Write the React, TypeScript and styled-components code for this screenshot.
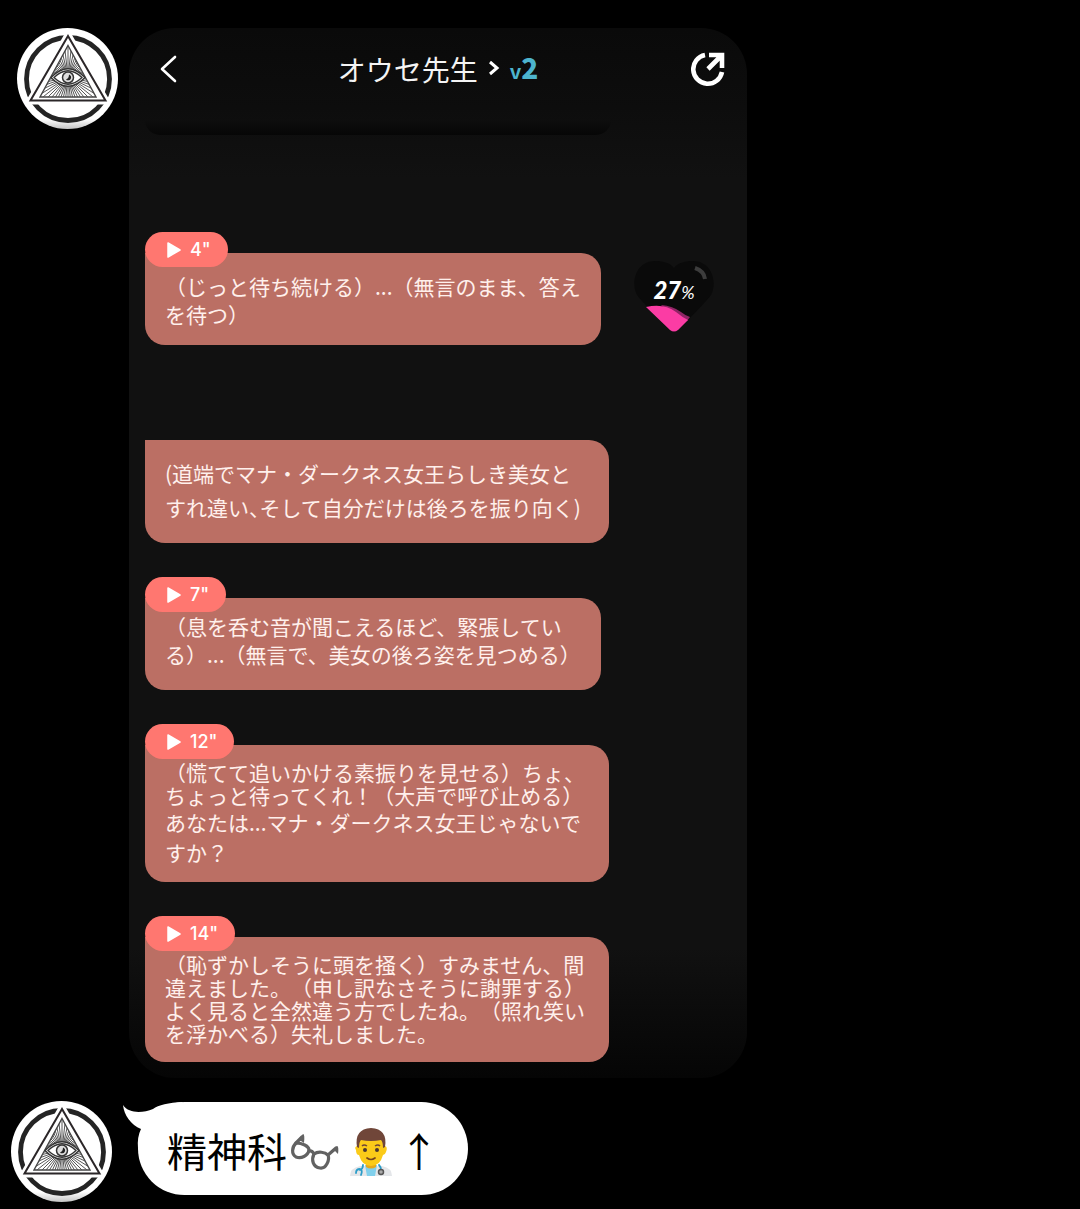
import React from "react";
import styled, { createGlobalStyle } from "styled-components";

const GlobalStyle = createGlobalStyle`
  *, *::before, *::after { box-sizing: border-box; }
  body {
    margin: 0;
    background: #000;
    font-family: "Noto Sans CJK JP", "Noto Sans", sans-serif;
    text-spacing-trim: space-all;
  }
  svg { display: block; flex: none; }
`;

const Chat = styled.main`
  display: flex;
  flex-direction: column;
  gap: 23px;
  padding: 28px 17px 7px;
`;

const ChatRow = styled.section<{ $gap: number; $pull?: number }>`
  display: flex;
  align-items: flex-start;
  gap: ${(p) => p.$gap}px;
  margin-left: ${(p) => -(p.$pull ?? 0)}px;
`;

const Card = styled.article`
  flex: 0 1 618px;
  min-width: 0;
  border-radius: 46px;
  overflow: hidden;
  padding-bottom: 16px;
  background: linear-gradient(180deg, #0a0a0a 0, #0d0d0d 80px, #111 150px, #111 calc(100% - 130px), #050505 100%);
`;

const Header = styled.header`
  display: grid;
  grid-template-columns: 1fr auto 1fr;
  align-items: center;
  height: 82px;
  padding: 0 22px;
`;

const IconButton = styled.button<{ $end?: boolean }>`
  justify-self: ${(p) => (p.$end ? "end" : "start")};
  padding: ${(p) => (p.$end ? "0" : "0 6px")};
  border: 0;
  background: none;
  color: #fff;
  cursor: pointer;
`;

const Title = styled.h1`
  display: flex;
  align-items: center;
  gap: 9px;
  margin: 0;
  font-size: 28px;
  line-height: 40px;
  font-weight: 400;
  color: #f4f4f4;
`;

const Version = styled.span`
  font-size: 28px;
  font-weight: 900;
  color: #4db4cd;
  small {
    font-size: 20px;
    font-weight: 700;
  }
`;

const FadedBubble = styled.div`
  width: 466px;
  max-width: calc(100% - 32px);
  height: 15px;
  margin: 10px 16px 97px;
  border-radius: 0 0 20px 20px;
  background: linear-gradient(180deg, #0e0e0e, #060606);
`;

const Messages = styled.div`
  display: flex;
  flex-direction: column;
  gap: 34px;
  padding: 0 16px;
`;

const FirstRow = styled.div`
  display: flex;
  align-items: flex-end;
  gap: 32px;
  margin-bottom: 61px;
`;

const Message = styled.div<{ $wide?: boolean }>`
  display: flex;
  flex-direction: column;
  align-items: flex-start;
  width: ${(p) => (p.$wide ? 464 : 456)}px;
  max-width: 100%;
`;

const PlayButton = styled.button`
  display: flex;
  align-items: center;
  gap: 9px;
  height: 35px;
  margin-bottom: -14px;
  padding: 0 17px 0 22px;
  border: 0;
  border-radius: 18px;
  background: #ff7770;
  color: #fff;
  font: 500 18px/35px Inter, sans-serif;
  cursor: pointer;
  z-index: 1;
`;

const Bubble = styled.p<{ $top: number; $bottom: number }>`
  width: 100%;
  margin: 0;
  padding: ${(p) => p.$top}px 12px ${(p) => p.$bottom}px 20px;
  border-radius: 0 20px 20px 20px;
  background: #bb6f64;
  color: #fff0ec;
  font-size: 21px;
  white-space: nowrap;
`;

const Line = styled.span<{ $height: number }>`
  display: block;
  line-height: ${(p) => p.$height}px;
`;

const HalfWidth = styled.span`
  font-feature-settings: "halt";
`;

const Affinity = styled.div`
  display: grid;
  place-items: center;
  margin-bottom: 12px;
  > * { grid-area: 1 / 1; }
`;

const Percent = styled.span`
  padding-bottom: 10px;
  font: italic 900 24px/28px Lato, sans-serif;
  color: #fff;
  small {
    font-size: 18px;
    font-weight: 400;
  }
`;

const Reply = styled.div`
  position: relative;
  display: flex;
  align-items: center;
  height: 93px;
  margin-top: 1px;
  padding: 2px 29px 0;
  border-radius: 47px;
  background: #fff;
  color: #000;
  font-size: 40px;
  line-height: 60px;
`;

const Tail = styled.svg`
  position: absolute;
  left: -15px;
  top: 0;
`;

const Emoji = styled.svg`
  margin: 4px 3px 0;
`;

const rays = Array.from({ length: 56 }, (_, i) => {
  const a = (i / 56) * Math.PI * 2;
  return `M51 49L${51 + 60 * Math.cos(a)} ${49 + 60 * Math.sin(a)}`;
}).join("");

function Avatar({ id }: { id: string }) {
  return (
    <svg width="101" height="101" viewBox="0 0 101 101" role="img" aria-label="avatar">
      <defs>
        <clipPath id={`${id}-tri`}>
          <path d="M51 18L78.500 68.700H23.500Z" />
        </clipPath>
        <linearGradient id={`${id}-bg`} x2="0" y2="1">
          <stop offset=".9" stopColor="#fff" />
          <stop offset="1" stopColor="#c4c4c4" />
        </linearGradient>
      </defs>
      <circle cx="50.500" cy="50.500" r="50.500" fill={`url(#${id}-bg)`} />
      <circle cx="51" cy="51" r="41.500" fill="#fff" stroke="#242424" strokeWidth="4.800" />
      <path d="M51 7L89 73H13Z" fill="#fff" stroke="#fff" strokeWidth="7" strokeLinejoin="round" />
      <path d="M51 8L88.500 72.500H13.500Z" fill="#fff" stroke="#2b2628" strokeWidth="2" />
      <g clipPath={`url(#${id}-tri)`}>
        <path d={rays} stroke="#444" strokeWidth="0.900" />
      </g>
      <path d="M51 17.500L79 69H23Z" fill="none" stroke="#444" strokeWidth="1.400" />
      <path d="M34 49.500Q51 32 68 49.500Q51 67 34 49.500Z" fill="#fff" stroke="#333" strokeWidth="1.300" />
      <path d="M37 49.500Q51 36 65 49.500Q51 63 37 49.500Z" fill="#fff" stroke="#333" strokeWidth="1.300" />
      <circle cx="51" cy="49.500" r="5.500" fill="#ddd" stroke="#333" strokeWidth="1.500" />
      <path d="M52 46.500a3 3 0 1 1-3 5q3-1 3-5Z" fill="#222" />
    </svg>
  );
}

function Play({ seconds }: { seconds: number }) {
  return (
    <PlayButton type="button">
      <svg width="14" height="16" viewBox="0 0 14 16" aria-hidden="true">
        <path d="M1 1L13 8L1 15Z" fill="currentColor" stroke="currentColor" strokeWidth="1.500" strokeLinejoin="round" />
      </svg>
      {seconds}"
    </PlayButton>
  );
}

function Heart() {
  return (
    <svg width="82" height="74" viewBox="0 0 82 74" aria-hidden="true">
      <path d="M41 73C37 72 9 43 4 36C-3 22 4 2 22 2C31 2 37 4 41 9C45 4 51 2 60 2C78 2 85 22 78 36C73 43 45 72 41 73Z" fill="#0a0a0a" />
      <path d="M28 46Q40 47 48 53Q53 57 57 58L54 62L40 58Z" fill="#8f2565" />
      <path d="M13 48Q31 44 43 53Q49 58 55 61L45 71Q41 74 37 71Z" fill="#fb3ca4" />
      <path d="M62 9Q71 12 72 20" fill="none" stroke="#3c3c3c" strokeWidth="4" />
    </svg>
  );
}

function Glasses() {
  return (
    <Emoji width="50" height="38" viewBox="0 0 50 38" role="img" aria-label="眼鏡">
      <g fill="none" stroke="#626262" strokeWidth="3.200" strokeLinecap="round" strokeLinejoin="round">
        <path d="M6 10C2 14 1 21 6 24C11 26 18 23 19 17C19 13 12 10 6 10Z" />
        <path d="M24 21C21 27 23 34 30 35C36 36 40 27 38 22C35 19 28 18 24 21Z" />
        <path d="M19 18Q22 17 24 21M6 10L12 4M38 22L46 15" />
      </g>
      <path d="M7 8L13 1Q15 1 14 10L11 8Z" fill="#626262" />
      <path d="M40 19L47 13Q49 13 48 21L45 18Z" fill="#626262" />
    </Emoji>
  );
}

function Doctor() {
  return (
    <Emoji width="50" height="50" viewBox="0 0 50 50" role="img" aria-label="医師">
      <path d="M4 49Q4 41 14 39H36Q46 41 46 49Z" fill="#e4e6e9" />
      <path d="M19 38H31L29 49H21Z" fill="#81d0ec" />
      <path d="M20 35H30V40Q25 43 20 40Z" fill="#e5a91c" />
      <path d="M10 23Q8 20 11 19L13 10H37L39 19Q42 20 40 25Q39 28 37 28Q34 39 25 39Q16 39 13 28Q10 28 10 23Z" fill="#fbcb19" />
      <path d="M11 20Q8 2 25 1Q42 2 39 20L37 21Q37 15 35 13Q25 15 15 13Q13 15 13 21Z" fill="#704639" />
      <path d="M16 19Q18 17 21 19M29 19Q32 17 34 19" fill="none" stroke="#704639" strokeWidth="1.500" />
      <circle cx="19" cy="23" r="2" fill="#493731" />
      <circle cx="31" cy="23" r="2" fill="#493731" />
      <path d="M21 31Q25 34 29 31" fill="none" stroke="#75451d" strokeWidth="1.700" strokeLinecap="round" />
      <path d="M17 38Q17 42 14 43M10 46Q10 42 14 42Q17 43 15 48M33 38Q35 40 35 43" fill="none" stroke="#2b9dc9" strokeWidth="1.800" strokeLinecap="round" />
      <circle cx="35" cy="45" r="2.500" fill="#aaa" stroke="#555" strokeWidth="1.500" />
    </Emoji>
  );
}

export default function App() {
  return (
    <>
      <GlobalStyle />
      <Chat>
        <ChatRow $gap={11}>
          <Avatar id="first" />
          <Card>
            <Header>
              <IconButton type="button" aria-label="戻る">
                <svg width="22" height="30" viewBox="0 0 22 30" fill="none" stroke="currentColor" strokeWidth="2.600" strokeLinecap="round" strokeLinejoin="round">
                  <path d="M18 3L5 15L18 27" />
                </svg>
              </IconButton>
              <Title>
                オウセ先生
                <svg width="14" height="18" viewBox="0 0 14 18" fill="none" stroke="#fff" strokeWidth="3" aria-hidden="true">
                  <path d="M3 2L10 8L3 14" />
                </svg>
                <Version><small>v</small>2</Version>
              </Title>
              <IconButton type="button" aria-label="共有" $end>
                <svg width="34" height="36" viewBox="0 0 34 36" fill="none" stroke="currentColor" strokeWidth="4.600">
                  <path d="M14 4A14.500 14.500 0 1 0 31 21" />
                  <path d="M18 4H31V17M31 4L17 18" />
                </svg>
              </IconButton>
            </Header>
            <FadedBubble />
            <Messages>
              <FirstRow>
                <Message>
                  <Play seconds={4} />
                  <Bubble $top={19} $bottom={17}>
                    <Line $height={28}>（じっと待ち続ける）...（無言のまま、答え</Line>
                    <Line $height={28}>を待つ）</Line>
                  </Bubble>
                </Message>
                <Affinity>
                  <Heart />
                  <Percent>27<small>%</small></Percent>
                </Affinity>
              </FirstRow>
              <Message $wide>
                <Bubble $top={16} $bottom={19}>
                  <Line $height={34}>(道端でマナ・ダークネス女王らしき美女と</Line>
                  <Line $height={34}>すれ違い<HalfWidth>、</HalfWidth>そして自分だけは後ろを振り向く)</Line>
                </Bubble>
              </Message>
              <Message>
                <Play seconds={7} />
                <Bubble $top={14} $bottom={22}>
                  <Line $height={28}>（息を呑む音が聞こえるほど、緊張してい</Line>
                  <Line $height={28}>る）...（無言で、美女の後ろ姿を見つめる）</Line>
                </Bubble>
              </Message>
              <Message $wide>
                <Play seconds={12} />
                <Bubble $top={16} $bottom={15}>
                  <Line $height={23}>（慌てて追いかける素振りを見せる）ちょ、</Line>
                  <Line $height={23}>ちょっと待ってくれ！（大声で呼び止める）</Line>
                  <Line $height={30}>あなたは...マナ・ダークネス女王じゃないで</Line>
                  <Line $height={30}>すか？</Line>
                </Bubble>
              </Message>
              <Message $wide>
                <Play seconds={14} />
                <Bubble $top={16} $bottom={17}>
                  <Line $height={23}>（恥ずかしそうに頭を掻く）すみません、間</Line>
                  <Line $height={23}>違えました。（申し訳なさそうに謝罪する）</Line>
                  <Line $height={23}>よく見ると全然違う方でしたね。（照れ笑い</Line>
                  <Line $height={23}>を浮かべる）失礼しました。</Line>
                </Bubble>
              </Message>
            </Messages>
          </Card>
        </ChatRow>
        <ChatRow $gap={26} $pull={6}>
          <Avatar id="second" />
          <Reply>
            <Tail width="62" height="47" viewBox="0 0 62 47" aria-hidden="true">
              <path d="M0 3C6 12 20 11 30 7Q38 1 60 0L40 26L15 46Q14 35 18 27C8 23 1 13 0 3Z" fill="#fff" />
            </Tail>
            精神科
            <Glasses />
            <Doctor />
            ↑
          </Reply>
        </ChatRow>
      </Chat>
    </>
  );
}
